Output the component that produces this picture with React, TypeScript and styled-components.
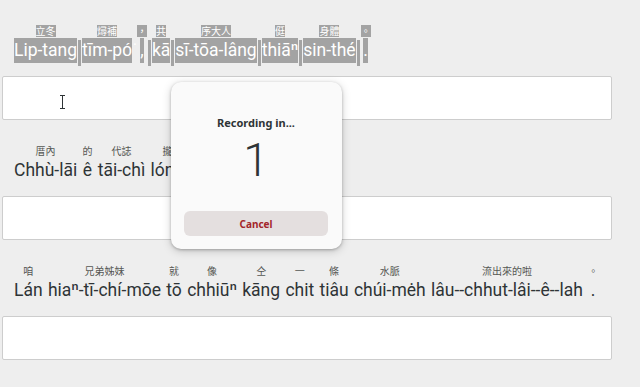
import React from "react";
import styled, { createGlobalStyle } from "styled-components";

const Global = createGlobalStyle`
  html, body { margin: 0; padding: 0; background: #eeeeee; }
  body { font-family: Roboto, "Noto Sans CJK TC", sans-serif; color: #2e3436; }
`;

const Page = styled.div`
  position: relative;
  width: 640px;
  height: 387px;
  overflow: hidden;
  padding-top: 25px;
  box-sizing: border-box;
`;

const Section = styled.div`
  display: flex;
  flex-direction: column;
  margin-bottom: 25px;
`;

const Line = styled.div<{ $gap: number }>`
  display: flex;
  align-items: flex-end;
  column-gap: ${(p) => p.$gap}px;
  padding-left: 14px;
  height: 38px;
  margin-bottom: 13px;
  white-space: nowrap;
`;

const Word = styled.div`
  display: flex;
  flex-direction: column;
  align-items: center;
  row-gap: 1px;
`;

const Rt = styled.span<{ $sel?: boolean }>`
  font-family: "Noto Sans CJK TC", sans-serif;
  font-size: 10px;
  line-height: 12px;
  height: 12px;
  color: ${(p) => (p.$sel ? "#ffffff" : "#555753")};
  background: ${(p) => (p.$sel ? "#a3a3a3" : "transparent")};
`;

const Base = styled.span<{ $sel?: boolean }>`
  font-family: Roboto, "Noto Sans CJK TC", sans-serif;
  font-size: 17.5px;
  line-height: 25px;
  height: 25px;
  color: ${(p) => (p.$sel ? "#ffffff" : "#2e3436")};
  background: ${(p) => (p.$sel ? "#a3a3a3" : "transparent")};
`;

const Sep = styled.span<{ $blank?: boolean }>`
  align-self: flex-end;
  width: 3px;
  height: 26px;
  margin-bottom: -3px;
  background: ${(p) => (p.$blank ? "transparent" : "#a3a3a3")};
`;

const Entry = styled.div`
  position: relative;
  margin: 0 28px 0 2px;
  height: 44px;
  box-sizing: border-box;
  background: #ffffff;
  border: 1px solid #cdcdcd;
  border-radius: 2px;
`;

const Cursor = styled.svg`
  position: absolute;
  left: 56px;
  top: 17px;
`;

const Dialog = styled.div`
  position: absolute;
  left: 171px;
  top: 82px;
  width: 171px;
  height: 167px;
  box-sizing: border-box;
  padding: 34px 14px 13px 13px;
  display: flex;
  flex-direction: column;
  align-items: center;
  background: #fafafa;
  border-radius: 10px;
  box-shadow: 0 1px 3px rgba(0, 0, 0, 0.25), 0 2px 10px rgba(0, 0, 0, 0.18);
`;

const Title = styled.div`
  font-family: "Noto Sans", sans-serif;
  font-weight: 700;
  font-size: 11px;
  line-height: 13px;
  color: #2e3436;
`;

const Count = styled.div`
  margin-top: 3px;
  font-family: Roboto, sans-serif;
  font-weight: 300;
  font-size: 46px;
  line-height: 56px;
  color: #2e3436;
`;

const CancelButton = styled.button`
  margin-top: 23px;
  width: 100%;
  height: 25px;
  border: none;
  border-radius: 6px;
  background: #e4dfdf;
  color: #a3262a;
  font-family: "Noto Sans", sans-serif;
  font-weight: 700;
  font-size: 10px;
  padding: 0;
`;

type Pair = [string, string];

const line1: Pair[] = [
  ["Lip-tang", "立冬"],
  ["tīm-pó\u0358", "燖補"],
  [",", "，"],
  ["kā", "共"],
  ["sī-tōa-lâng", "序大人"],
  ["thiāⁿ", "侹"],
  ["sin-thé", "身體"],
  [".", "。"],
];

const line2: Pair[] = [
  ["Chhù-lāi", "厝內"],
  ["ê", "的"],
  ["tāi-chì", "代誌"],
  ["lóng", "攏"],
  ["chéng-lí", "整理"],
  ["hó", "好"],
  [".", "。"],
];

const line3: Pair[] = [
  ["Lán", "咱"],
  ["hiaⁿ-tī-chí-mōe", "兄弟姊妹"],
  ["tō", "就"],
  ["chhiūⁿ", "像"],
  ["kāng", "仝"],
  ["chit", "一"],
  ["tiâu", "條"],
  ["chúi-mėh", "水脈"],
  ["lâu--chhut-lâi--ê--lah", "流出來的啦"],
  [".", "。"],
];

function SelectedLine({ words }: { words: Pair[] }) {
  const out: React.ReactNode[] = [];
  words.forEach(([b, r], i) => {
    if (i > 0) out.push(<Sep key={"s" + i} $blank={b === ","} />);
    out.push(
      <Word key={i}>
        <Rt $sel>{r}</Rt>
        <Base $sel>{b}</Base>
      </Word>
    );
  });
  return <Line $gap={1}>{out}</Line>;
}

function PlainLine({ words }: { words: Pair[] }) {
  return (
    <Line $gap={5.3}>
      {words.map(([b, r], i) => (
        <Word key={i}>
          <Rt>{r}</Rt>
          <Base>{b}</Base>
        </Word>
      ))}
    </Line>
  );
}

export default function App() {
  return (
    <Page>
      <Global />
      <Section>
        <SelectedLine words={line1} />
        <Entry>
          <Cursor width="7" height="16" viewBox="0 0 7 16">
            <path d="M1 1h2v14H1M5 1H3M5 15H3" stroke="#ffffff" strokeWidth="2.5" fill="none" />
            <path d="M1 1.5h5M1 14.5h5M3.5 1.5v13" stroke="#2e3436" strokeWidth="1" fill="none" />
          </Cursor>
        </Entry>
      </Section>
      <Section>
        <PlainLine words={line2} />
        <Entry />
      </Section>
      <Section>
        <PlainLine words={line3} />
        <Entry />
      </Section>
      <Dialog>
        <Title>Recording in...</Title>
        <Count>1</Count>
        <CancelButton>Cancel</CancelButton>
      </Dialog>
    </Page>
  );
}
